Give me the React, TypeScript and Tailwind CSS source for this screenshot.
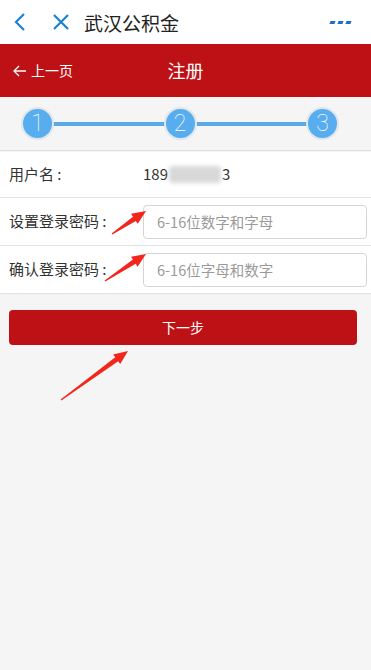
import React from 'react';

const font = { fontFamily: '"Noto Sans CJK SC", "Noto Sans", sans-serif' };

const Step = ({ n }: { n: number }) => (
  <div className="relative z-10 flex h-[33px] w-[33px] items-center justify-center rounded-full border-[2px] border-[#dfe6ec] bg-[#58adee] text-[23px] font-thin leading-none text-white [font-family:Roboto,sans-serif]">
    {n}
  </div>
);

const Arrow = ({ x1, y1, x2, y2 }: { x1: number; y1: number; x2: number; y2: number }) => {
  const dx = x2 - x1;
  const dy = y2 - y1;
  const len = Math.hypot(dx, dy);
  const ux = dx / len;
  const uy = dy / len;
  const px = -uy;
  const py = ux;
  const head = 14;
  const bx = x2 - ux * head;
  const by = y2 - uy * head;
  const pts = [
    [x1 + px * 0.6, y1 + py * 0.6],
    [bx + px * 2.5, by + py * 2.5],
    [bx + px * 6, by + py * 6],
    [x2, y2],
    [bx - px * 6, by - py * 6],
    [bx - px * 2.5, by - py * 2.5],
    [x1 - px * 0.6, y1 - py * 0.6],
  ]
    .map((p) => p.join(','))
    .join(' ');
  return <polygon points={pts} fill="#f2261c" />;
};

export default function App() {
  return (
    <div className="relative min-h-[670px] w-full bg-[#f5f5f5] text-[#333]" style={font}>
      {/* app bar */}
      <div className="flex h-[44px] items-center bg-white">
        <svg width="14" height="20" viewBox="0 0 14 20" className="ml-[13px]">
          <path d="M11 2 L3 10 L11 18" fill="none" stroke="#1b82d3" strokeWidth="2.2" />
        </svg>
        <svg width="20" height="20" viewBox="0 0 20 20" className="ml-[24px]">
          <path d="M3 3 L17 17 M17 3 L3 17" fill="none" stroke="#1b82d3" strokeWidth="2.2" />
        </svg>
        <span className="ml-[13px] text-[19px] leading-none text-[#222]">武汉公积金</span>
        <div className="ml-auto mr-[20px] flex gap-[3px]">
          <span className="h-[3px] w-[5px] skew-x-[-20deg] bg-[#1b6fd3]" />
          <span className="h-[3px] w-[5px] skew-x-[-20deg] bg-[#1b6fd3]" />
          <span className="h-[3px] w-[5px] skew-x-[-20deg] bg-[#1b6fd3]" />
        </div>
      </div>

      {/* red header */}
      <div className="relative flex h-[53px] items-center bg-[#be1115] text-white">
        <div className="ml-[12px] flex items-center gap-[4px] text-[14px]">
          <svg width="15" height="12" viewBox="0 0 15 12">
            <path d="M14 6 H2 M7 1 L2 6 L7 11" fill="none" stroke="#fff" strokeWidth="1.3" />
          </svg>
          <span>上一页</span>
        </div>
        <span className="absolute left-1/2 -translate-x-1/2 text-[18px]">注册</span>
      </div>

      {/* stepper */}
      <div className="relative flex h-[54px] items-center justify-between border-b border-[#e0e0e0] pl-[21px] pr-[32px]">
        <div className="absolute left-[40px] right-[50px] top-1/2 h-[4px] -translate-y-1/2 bg-[#5aa9e4]" />
        <Step n={1} />
        <Step n={2} />
        <Step n={3} />
      </div>

      {/* form rows */}
      <div className="mt-[1px] bg-white">
        <div className="flex h-[46px] items-center border-b border-[#e3e3e3] pl-[9px] text-[15px]">
          <span className="w-[134px]">用户名 :</span>
          <span className="flex items-center">
            189
            <span className="mx-[1px] h-[17px] w-[52px] rounded-[4px] bg-[#d8d8d8] blur-[2px]" />
            3
          </span>
        </div>
        <div className="flex h-[48px] items-center border-b border-[#e3e3e3] pl-[9px] pr-[4px] text-[15px]">
          <span className="w-[134px]">设置登录密码 :</span>
          <div className="flex h-[34px] flex-1 items-center rounded-[4px] border border-[#d5d5d5] pl-[13px] text-[14.5px] text-[#9a9a9a]">
            6-16位数字和字母
          </div>
        </div>
        <div className="flex h-[48px] items-center border-b border-[#e3e3e3] pl-[9px] pr-[4px] text-[15px]">
          <span className="w-[134px]">确认登录密码 :</span>
          <div className="flex h-[34px] flex-1 items-center rounded-[4px] border border-[#d5d5d5] pl-[13px] text-[14.5px] text-[#9a9a9a]">
            6-16位字母和数字
          </div>
        </div>
      </div>

      <div className="px-[9px] pt-[16px]">
        <button className="flex h-[35px] w-[348px] items-center justify-center rounded-[4px] bg-[#be1115] text-[14px] text-white">
          下一步
        </button>
      </div>

      {/* annotation arrows */}
      <svg className="pointer-events-none absolute left-0 top-0" width="371" height="670">
        <Arrow x1={112} y1={234} x2={146} y2={211} />
        <Arrow x1={105} y1={281} x2={146} y2={254} />
        <Arrow x1={61} y1={400} x2={128} y2={351} />
      </svg>
    </div>
  );
}
